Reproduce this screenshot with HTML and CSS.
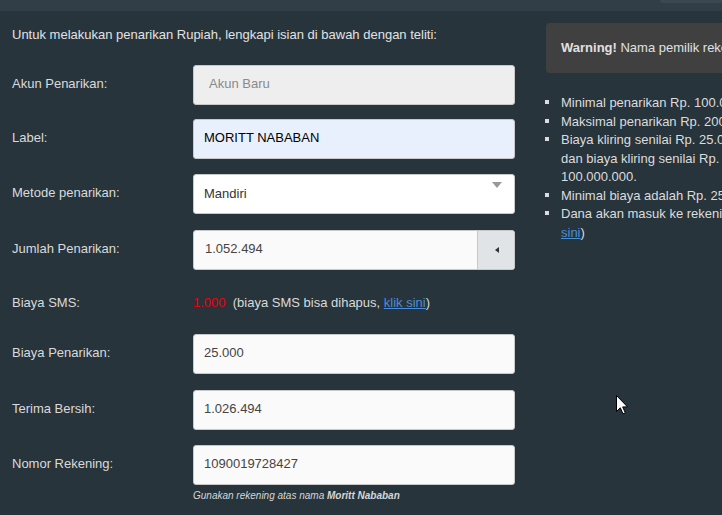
FILE: index.html
```html
<!DOCTYPE html>
<html lang="id">
<head>
<meta charset="utf-8">
<title>Penarikan Rupiah</title>
<link rel="stylesheet" href="styles.css">
</head>
<body>
<div class="topbar"><div class="topbar-tab"></div></div>
<div class="main">
  <div class="left">
    <p class="intro">Untuk melakukan penarikan Rupiah, lengkapi isian di bawah dengan teliti:</p>
    <div class="row row-tight">
      <div class="label">Akun Penarikan:</div>
      <div class="field field-disabled">Akun Baru</div>
    </div>
    <div class="row">
      <div class="label">Label:</div>
      <div class="field field-autofill">MORITT NABABAN</div>
    </div>
    <div class="row row-loose">
      <div class="label">Metode penarikan:</div>
      <div class="field field-select"><span>Mandiri</span><span class="select-arrow"></span></div>
    </div>
    <div class="row">
      <div class="label">Jumlah Penarikan:</div>
      <div class="field field-group"><span class="group-text">1.052.494</span><span class="addon"><span class="addon-arrow"></span></span></div>
    </div>
    <div class="row row-sms">
      <div class="label">Biaya SMS:</div>
      <div class="sms"><span class="sms-fee">1.000</span>&nbsp; (biaya SMS bisa dihapus, <a href="#" class="link">klik sini</a>)</div>
    </div>
    <div class="row row-loose">
      <div class="label">Biaya Penarikan:</div>
      <div class="field">25.000</div>
    </div>
    <div class="row">
      <div class="label">Terima Bersih:</div>
      <div class="field">1.026.494</div>
    </div>
    <div class="row row-last">
      <div class="label">Nomor Rekening:</div>
      <div class="field">1090019728427</div>
    </div>
    <div class="help">Gunakan rekening atas nama <b>Moritt Nababan</b></div>
  </div>
  <div class="right">
    <div class="warning"><b>Warning!</b>&nbsp;Nama pemilik rekening harus sama dengan nama pemilik akun.</div>
    <ul class="notes">
      <li>Minimal penarikan Rp. 100.000</li>
      <li>Maksimal penarikan Rp. 200.000.000</li>
      <li>Biaya kliring senilai Rp. 25.000 untuk penarikan di bawah<br>dan biaya kliring senilai Rp. 50.000 untuk penarikan di atas Rp.<br>100.000.000.</li>
      <li>Minimal biaya adalah Rp. 25.000</li>
      <li>Dana akan masuk ke rekening Anda dalam 1x24 jam (info, klik<br><a href="#" class="link">sini</a>)</li>
    </ul>
  </div>
</div>
<svg class="cursor" width="13" height="20" viewBox="0 0 13 20"><path d="M0.5 0.5 L0.5 16.5 L4.3 12.8 L7 18.8 L9.3 17.8 L6.7 11.9 L11.5 11.9 Z" fill="#fff" stroke="#000" stroke-width="1"/></svg>
</body>
</html>
```
FILE: styles.css
```css
html, body {
  margin: 0;
  padding: 0;
}
body {
  width: 722px;
  height: 515px;
  overflow: hidden;
  background: #28343c;
  color: #dcdcdc;
  font-family: "Liberation Sans", Arial, sans-serif;
  font-size: 13px;
  line-height: 1.428571;
  position: relative;
}
.topbar {
  height: 11px;
  background: #303e47;
  display: flex;
  justify-content: flex-end;
}
.topbar-tab {
  width: 62px;
  height: 3px;
  background: #3a4851;
  border-bottom-left-radius: 8px;
}
.main {
  display: flex;
  padding-left: 12px;
}
.left {
  width: 503px;
  flex-shrink: 0;
  padding-top: 15px;
}
.intro {
  margin: 0 0 20px;
  color: #e2e2e2;
}
.row {
  display: flex;
  align-items: center;
  height: 40px;
  margin-bottom: 15px;
}
.row-tight {
  margin-bottom: 14px;
}
.row-loose {
  margin-bottom: 16px;
}
.label {
  width: 181px;
  flex-shrink: 0;
  color: #dadada;
}
.field {
  box-sizing: border-box;
  width: 322px;
  height: 40px;
  border: 1px solid #c8c8c8;
  border-radius: 3px;
  background: #fafafa;
  color: #444;
  padding: 0 10px;
  display: flex;
  align-items: center;
}
.field-disabled {
  background: #eeeeee;
  color: #8a8a8a;
  padding-left: 15px;
}
.field-autofill {
  background: #e8f0fe;
  color: #000;
}
.field-select {
  background: #fff;
  color: #333;
  justify-content: space-between;
  align-items: flex-start;
  padding-right: 12px;
}
.field-select span:first-child {
  line-height: 38px;
}
.select-arrow {
  margin-top: 7px;
  width: 0;
  height: 0;
  border-left: 5px solid transparent;
  border-right: 5px solid transparent;
  border-top: 6px solid #999;
}
.field-group {
  padding: 0;
  align-items: stretch;
  overflow: hidden;
}
.group-text {
  flex: 1;
  display: flex;
  align-items: center;
  padding-left: 11px;
}
.addon {
  width: 36px;
  background: #e1e4e7;
  border-left: 1px solid #c8c8c8;
  display: flex;
  align-items: center;
  justify-content: center;
}
.addon-arrow {
  width: 0;
  height: 0;
  border-top: 3px solid transparent;
  border-bottom: 3px solid transparent;
  border-right: 4px solid #333;
  margin-left: 1px;
}
.row-sms {
  box-sizing: border-box;
  height: 34px;
  padding-top: 4px;
}
.sms {
  color: #dadada;
}
.sms-fee {
  color: #e8000b;
}
.link {
  color: #4a8fd6;
  text-decoration: underline;
}
.row-last {
  margin-bottom: 4px;
}
.help {
  margin-left: 181px;
  font-size: 10px;
  line-height: 14px;
  font-style: italic;
  color: #d6d6d6;
}
.right {
  margin-left: 31px;
  width: 420px;
  flex-shrink: 0;
  padding-top: 12px;
}
.warning {
  box-sizing: border-box;
  height: 50px;
  background: #404040;
  border-radius: 4px;
  padding: 0 15px;
  display: flex;
  align-items: center;
  white-space: nowrap;
  color: #e0e0e0;
}
.notes {
  margin: 21px 0 0;
  padding-left: 15px;
  list-style: none;
  white-space: nowrap;
  color: #dcdcdc;
}
.notes li::before {
  content: "";
  display: inline-block;
  width: 4px;
  height: 4px;
  background: #dcdcdc;
  margin-left: -16px;
  margin-right: 12px;
  vertical-align: 3px;
}
.cursor {
  position: absolute;
  left: 616px;
  top: 395px;
}
```
